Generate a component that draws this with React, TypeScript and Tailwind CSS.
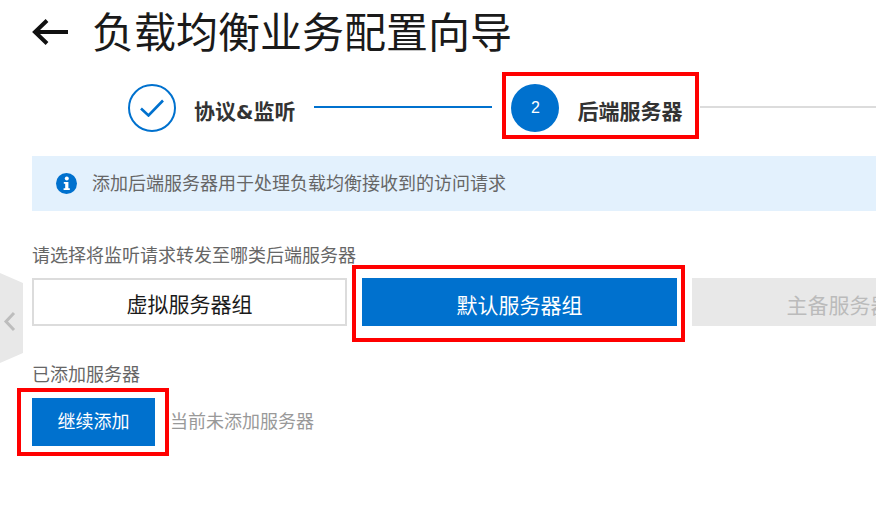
import React from "react";

function Annot({ className }: { className: string }) {
  return <div className={"absolute border-4 border-[#ff0000] pointer-events-none " + className} />;
}

export default function App() {
  return (
    <div className="relative w-[876px] h-[522px] overflow-hidden bg-white pl-8 font-['Liberation_Sans','Noto_Sans_CJK_SC',sans-serif]">
      {/* Header */}
      <div className="flex items-center h-[64px] gap-[24px]">
        <svg width="36" height="28" viewBox="0 0 36 28" fill="none" className="shrink-0">
          <path d="M36 14H3M15 2.5L3 14l12 11.5" stroke="#111" strokeWidth="4" />
        </svg>
        <h1 className="text-[42px] leading-[64px] pt-[3px] font-normal text-[#1a1a1a] whitespace-nowrap">负载均衡业务配置向导</h1>
      </div>

      {/* Steps */}
      <div className="flex items-start h-[48px] mt-[20px] ml-[96px] w-[800px]">
        <div className="w-[48px] h-[48px] shrink-0 rounded-full border-2 border-[#0071ce] flex items-center justify-center">
          <svg width="24" height="18" viewBox="0 0 24 18" fill="none">
            <path d="M1 9.5L8.5 16.5L23 1.5" stroke="#0071ce" strokeWidth="2.6" />
          </svg>
        </div>
        <span className="ml-[18px] mt-[14px] text-[21px] leading-[28px] font-bold text-[#333] whitespace-nowrap">
          协议<span className="font-['DejaVu_Sans',sans-serif] text-[20px]">&amp;</span>监听
        </span>
        <div className="ml-[19px] mt-[22px] w-[178px] h-[2px] bg-[#0071ce] shrink-0" />
        <div className="ml-[19px] w-[48px] h-[48px] shrink-0 rounded-full bg-[#0071ce] flex items-center justify-center text-white text-[16px]">2</div>
        <span className="ml-[18px] mt-[14px] text-[21px] leading-[28px] font-bold text-[#333] whitespace-nowrap">后端服务器</span>
        <div className="ml-[18px] mt-[22px] w-[200px] h-[2px] bg-[#dcdcdc] shrink-0" />
      </div>

      {/* Info */}
      <div className="mt-[24px] h-[55px] bg-[#e3f1fd] flex items-center pl-[24px] gap-[15px]">
        <svg width="21" height="21" viewBox="0 0 21 21" className="shrink-0">
          <circle cx="10.5" cy="10.5" r="10.5" fill="#0071ce" />
          <circle cx="10.8" cy="5.6" r="2" fill="#fff" />
          <path d="M7.8 9h4.6v6.2h1.4V17H7.6v-1.8h1.6v-4.4H7.8z" fill="#fff" />
        </svg>
        <span className="text-[18px] leading-[26px] text-[#666] whitespace-nowrap">添加后端服务器用于处理负载均衡接收到的访问请求</span>
      </div>

      {/* Server type */}
      <div className="mt-[33px] text-[18px] leading-[24px] text-[#666] whitespace-nowrap">请选择将监听请求转发至哪类后端服务器</div>
      <div className="mt-[10px] flex gap-[15px] w-[1000px]">
        <div className="w-[315px] h-[48px] pt-[6px] border-2 border-[#dcdcdc] flex items-center justify-center text-[21px] text-[#1a1a1a]">虚拟服务器组</div>
        <div className="w-[315px] h-[48px] pt-[7px] bg-[#0071ce] flex items-center justify-center text-[21px] text-white">默认服务器组</div>
        <div className="w-[315px] h-[48px] pt-[7px] bg-[#e8e8e8] flex items-center justify-center text-[21px] text-[#bbb]">主备服务器组</div>
      </div>

      {/* Added servers */}
      <div className="mt-[37px] text-[18px] leading-[24px] text-[#666] whitespace-nowrap">已添加服务器</div>
      <div className="mt-[11px] flex items-center">
        <div className="w-[123px] h-[48px] bg-[#0071ce] flex items-center justify-center text-[18px] text-white">继续添加</div>
        <span className="ml-[15px] text-[18px] text-[#999] whitespace-nowrap">当前未添加服务器</span>
      </div>

      {/* Collapsed side tab */}
      <svg width="23" height="90" viewBox="0 0 23 90" className="absolute left-0 top-[273px]">
        <path d="M0 0L23 10V80L0 90Z" fill="#e8e8e8" />
        <path d="M14 40L6 48.5L14 57" stroke="#bdbdbd" strokeWidth="3" fill="none" />
      </svg>

      {/* Red annotations */}
      <Annot className="left-[502px] top-[72px] w-[197px] h-[67px]" />
      <Annot className="left-[352px] top-[265px] w-[333px] h-[77px]" />
      <Annot className="left-[17px] top-[388px] w-[152px] h-[68px]" />
    </div>
  );
}
